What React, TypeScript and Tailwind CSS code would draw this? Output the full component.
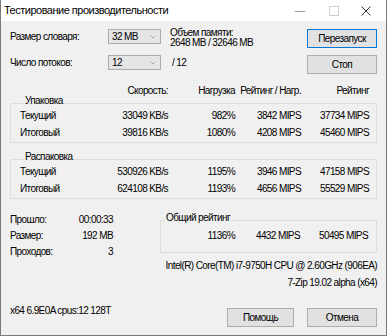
import { ChevronDown } from "lucide-react";

const rows1 = [
  ["Текущий", "33049 KB/s", "982%", "3842 MIPS", "37734 MIPS"],
  ["Итоговый", "39816 KB/s", "1080%", "4208 MIPS", "45460 MIPS"],
];

const rows2 = [
  ["Текущий", "530926 KB/s", "1195%", "3946 MIPS", "47158 MIPS"],
  ["Итоговый", "624108 KB/s", "1193%", "4656 MIPS", "55529 MIPS"],
];

function Select({ value }: { value: string }) {
  return (
    <div className="w-[53px] h-[15px] bg-[#e5e5e5] border border-[#acacac] flex items-center pl-[3px] pr-[3px]">
      <span className="flex-1 leading-[13px]">{value}</span>
      <ChevronDown className="w-[8px] h-[8px] text-[#666]" strokeWidth={1.5} />
    </div>
  );
}

function Btn({ label, focused, w = "w-[70px]" }: { label: string; focused?: boolean; w?: string }) {
  return (
    <button
      className={`${w} h-[19px] bg-[#e1e1e1] border ${
        focused ? "border-[#0078d7]" : "border-[#adadad]"
      } flex items-center justify-center leading-none`}
    >
      {label}
    </button>
  );
}

function Row({ cells }: { cells: string[] }) {
  return (
    <div className="grid grid-cols-[60px_88px_67px_66px_68px] h-[17px] items-center">
      <span>{cells[0]}</span>
      <span className="text-right">{cells[1]}</span>
      <span className="text-right">{cells[2]}</span>
      <span className="text-right">{cells[3]}</span>
      <span className="text-right">{cells[4]}</span>
    </div>
  );
}

function Group({ title, rows }: { title: string; rows: string[][] }) {
  return (
    <div className="border border-[#dcdcdc] pl-[9px] pb-[1px]">
      <div className="-mt-[10px] ml-[4px] w-fit bg-[#f0f0f0] px-[1px] leading-[13px]">{title}</div>
      {rows.map((r) => (
        <Row key={r[0]} cells={r} />
      ))}
    </div>
  );
}

export default function App() {
  return (
    <div className="w-[387px] h-[336px] overflow-hidden whitespace-nowrap bg-[#f0f0f0] border-x border-b border-[#7a7a7a] flex flex-col text-[10px] tracking-[-0.6px] text-black font-['Liberation_Sans',sans-serif]">
      {/* заголовок окна */}
      <div className="h-[21px] bg-white flex items-center pl-[3px] shrink-0">
        <span className="text-[11px] tracking-[-0.5px]">Тестирование производительности</span>
        <div className="ml-auto flex items-center h-full">
          <svg width="10" height="10" viewBox="0 0 10 10" className="mr-[24px]">
            <line x1="0" y1="5.5" x2="10" y2="5.5" stroke="#999" strokeWidth="1" />
          </svg>
          <svg width="10" height="10" viewBox="0 0 10 10" className="mr-[22px]">
            <rect x="0.5" y="0.5" width="9" height="9" fill="none" stroke="#cfcfcf" strokeWidth="1" />
          </svg>
          <svg width="10" height="10" viewBox="0 0 10 10" className="mr-[15px]">
            <path d="M0.5 0.5 L9.5 9.5 M9.5 0.5 L0.5 9.5" stroke="#333" strokeWidth="1" />
          </svg>
        </div>
      </div>

      <div className="flex flex-col pl-[9px] pr-[9px]">
        {/* параметры */}
        <div className="flex flex-col gap-[6px] mt-[8px]">
          <div className="flex items-start h-[20px]">
            <span className="w-[98px] leading-[15px]">Размер словаря:</span>
            <Select value="32 MB" />
            <div className="ml-[9px] -mt-[1px] leading-[10px]">
              <div>Объем памяти:</div>
              <div>2648 MB / 32646 MB</div>
            </div>
            <div className="ml-auto">
              <Btn label="Перезапуск" focused />
            </div>
          </div>
          <div className="flex items-start h-[20px]">
            <span className="w-[98px] leading-[15px]">Число потоков:</span>
            <Select value="12" />
            <span className="ml-[11px] leading-[15px]">/ 12</span>
            <div className="ml-auto">
              <Btn label="Стоп" />
            </div>
          </div>
        </div>

        {/* заголовки */}
        <div className="mt-[9px] pl-[10px] grid grid-cols-[60px_88px_67px_66px_68px] leading-[13px]">
          <span />
          <span className="text-right">Скорость:</span>
          <span className="text-right">Нагрузка</span>
          <span className="text-right">Рейтинг / Нагр.</span>
          <span className="text-right">Рейтинг</span>
        </div>

        <div className="mt-[6px]">
          <Group title="Упаковка" rows={rows1} />
        </div>
        <div className="mt-[16px]">
          <Group title="Распаковка" rows={rows2} />
        </div>

        {/* итоги */}
        <div className="flex items-start">
          <div className="mt-[12px] grid grid-cols-[60px_43px] auto-rows-[16px] items-center">
            <span>Прошло:</span>
            <span className="text-right">00:00:33</span>
            <span>Размер:</span>
            <span className="text-right">192 MB</span>
            <span>Проходов:</span>
            <span className="text-right">3</span>
          </div>
          <div className="ml-auto mt-[21px] w-[217px] border border-[#dcdcdc] pr-[8px] pb-[8px]">
            <div className="-mt-[10px] ml-[4px] w-fit bg-[#f0f0f0] px-[1px] leading-[13px]">Общий рейтинг</div>
            <div className="mt-[3px] grid grid-cols-[74px_65px_68px] h-[17px] items-center">
              <span className="text-right">1136%</span>
              <span className="text-right">4432 MIPS</span>
              <span className="text-right">50495 MIPS</span>
            </div>
          </div>
        </div>

        <div className="text-right leading-[13px]">
          Intel(R) Core(TM) i7-9750H CPU @ 2.60GHz (906EA)
        </div>
        <div className="mt-[4px] text-right leading-[13px]">7-Zip 19.02 alpha (x64)</div>

        <div className="mt-[15px] flex items-start">
          <span className="leading-[13px]">x64 6.9E0A cpus:12 128T</span>
          <div className="ml-auto mt-[4px] flex gap-[13px]">
            <Btn label="Помощь" w="w-[67px]" />
            <Btn label="Отмена" />
          </div>
        </div>
      </div>
    </div>
  );
}
